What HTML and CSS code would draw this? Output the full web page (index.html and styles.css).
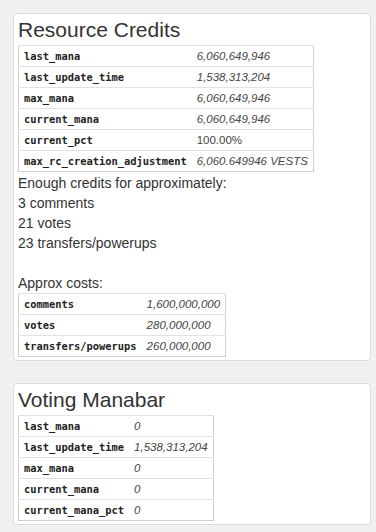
FILE: index.html
```html
<!DOCTYPE html>
<html>
<head>
<meta charset="utf-8">
<link rel="stylesheet" href="styles.css">
</head>
<body>
<div class="panel">
  <h3 class="title">Resource Credits</h3>
  <table class="kv">
    <tr><td class="k">last_mana</td><td class="v">6,060,649,946</td></tr>
    <tr><td class="k">last_update_time</td><td class="v">1,538,313,204</td></tr>
    <tr><td class="k">max_mana</td><td class="v">6,060,649,946</td></tr>
    <tr><td class="k">current_mana</td><td class="v">6,060,649,946</td></tr>
    <tr><td class="k">current_pct</td><td class="v plain">100.00%</td></tr>
    <tr><td class="k">max_rc_creation_adjustment</td><td class="v">6,060.649946 VESTS</td></tr>
  </table>
  <div class="text">Enough credits for approximately:<br>3 comments<br>21 votes<br>23 transfers/powerups<br><br>Approx costs:</div>
  <table class="kv">
    <tr><td class="k">comments</td><td class="v">1,600,000,000</td></tr>
    <tr><td class="k">votes</td><td class="v">280,000,000</td></tr>
    <tr><td class="k">transfers/powerups</td><td class="v">260,000,000</td></tr>
  </table>
</div>
<div class="panel">
  <h3 class="title">Voting Manabar</h3>
  <table class="kv">
    <tr><td class="k">last_mana</td><td class="v">0</td></tr>
    <tr><td class="k">last_update_time</td><td class="v">1,538,313,204</td></tr>
    <tr><td class="k">max_mana</td><td class="v">0</td></tr>
    <tr><td class="k">current_mana</td><td class="v">0</td></tr>
    <tr><td class="k">current_mana_pct</td><td class="v">0</td></tr>
  </table>
</div>
</body>
</html>
```
FILE: styles.css
```css
html, body {
  margin: 0;
  background: #f0f0f0;
}
body {
  padding: 13px 5px 0 13px;
  font-family: "Liberation Sans", Arial, sans-serif;
  color: #333;
  display: flex;
  flex-direction: column;
  gap: 22px;
}
.panel {
  background: #fff;
  border: 1px solid #dcdcdc;
  border-radius: 4px;
  padding: 4px 4px 3px 4px;
}
.title {
  margin: 0 0 3px 0;
  font-size: 21px;
  font-weight: normal;
  line-height: 24px;
  color: #333;
}
.kv {
  border-collapse: collapse;
  border: 1px solid #cfcfcf;
}
.kv td {
  border-top: 1px solid #e2e2e2;
  padding: 4px 5px;
  line-height: 12px;
  height: 12px;
  white-space: nowrap;
}
.kv .k {
  font-family: "DejaVu Sans Mono", monospace;
  font-size: 10.4px;
  font-weight: bold;
  color: #222;
}
.kv .v {
  font-size: 11.5px;
  font-style: italic;
  color: #444;
}
.kv .v.plain {
  font-style: normal;
}
.text {
  font-size: 14px;
  line-height: 20px;
  margin-top: 1px;
}
```
